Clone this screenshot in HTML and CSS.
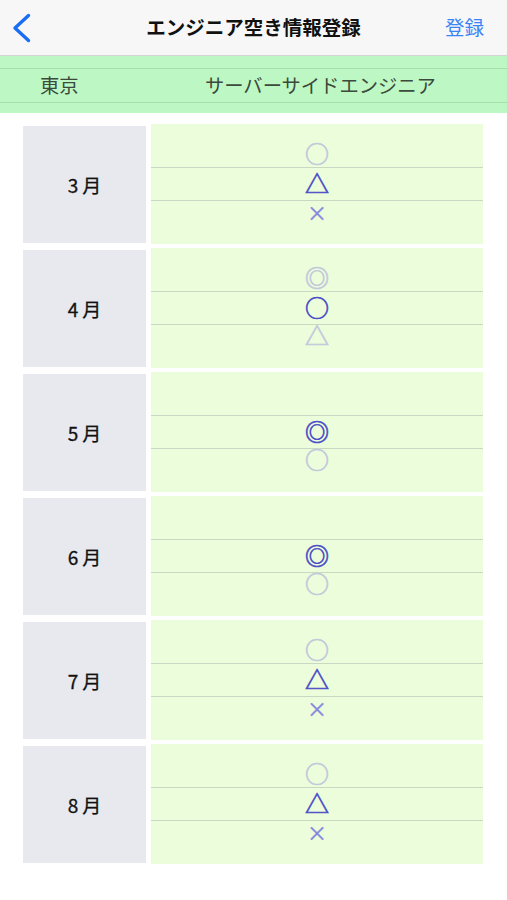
FILE: index.html
```html
<!DOCTYPE html>
<html lang="ja">
<head>
<meta charset="utf-8">
<title>エンジニア空き情報登録</title>
<link rel="stylesheet" href="styles.css">
</head>
<body>
<header class="nav">
  <div class="nav-back">
    <svg width="40" height="55" viewBox="0 0 40 55"><polyline points="28.5,15.5 15,28 28.5,40.5" fill="none" stroke="#1a6ef4" stroke-width="3.4" stroke-linecap="round" stroke-linejoin="round"/></svg>
  </div>
  <div class="nav-title">エンジニア空き情報登録</div>
  <div class="nav-action">登録</div>
</header>
<section class="cond">
  <div class="cond-row">
    <span class="cond-area">東京</span>
    <span class="cond-job">サーバーサイドエンジニア</span>
  </div>
</section>
<main class="list">
  <div class="month">
    <div class="month-label">3月</div>
    <div class="picker">
      <div class="row row-top"><span class="sym dim">○</span></div>
      <div class="row row-mid"><span class="sym on">△</span></div>
      <div class="row row-bot"><span class="sym x">×</span></div>
    </div>
  </div>
  <div class="month">
    <div class="month-label">4月</div>
    <div class="picker">
      <div class="row row-top"><span class="sym dim">◎</span></div>
      <div class="row row-mid"><span class="sym on">○</span></div>
      <div class="row row-bot"><span class="sym dim">△</span></div>
    </div>
  </div>
  <div class="month">
    <div class="month-label">5月</div>
    <div class="picker">
      <div class="row row-top"></div>
      <div class="row row-mid"><span class="sym on">◎</span></div>
      <div class="row row-bot"><span class="sym dim">○</span></div>
    </div>
  </div>
  <div class="month">
    <div class="month-label">6月</div>
    <div class="picker">
      <div class="row row-top"></div>
      <div class="row row-mid"><span class="sym on">◎</span></div>
      <div class="row row-bot"><span class="sym dim">○</span></div>
    </div>
  </div>
  <div class="month">
    <div class="month-label">7月</div>
    <div class="picker">
      <div class="row row-top"><span class="sym dim">○</span></div>
      <div class="row row-mid"><span class="sym on">△</span></div>
      <div class="row row-bot"><span class="sym x">×</span></div>
    </div>
  </div>
  <div class="month">
    <div class="month-label">8月</div>
    <div class="picker">
      <div class="row row-top"><span class="sym dim">○</span></div>
      <div class="row row-mid"><span class="sym on">△</span></div>
      <div class="row row-bot"><span class="sym x">×</span></div>
    </div>
  </div>
</main>
</body>
</html>
```
FILE: styles.css
```css
* { box-sizing: border-box; }
html, body { margin: 0; padding: 0; }
body {
  width: 507px;
  height: 900px;
  background: #ffffff;
  font-family: "Noto Sans CJK JP", "Noto Sans", sans-serif;
  overflow: hidden;
}
.nav {
  height: 56px;
  background: #f7f7f7;
  border-bottom: 1px solid #d4d4d4;
  display: grid;
  grid-template-columns: 100px 1fr 100px;
  align-items: center;
}
.nav-back { height: 55px; }
.nav-back svg { display: block; }
.nav-title {
  text-align: center;
  font-size: 19.5px;
  font-weight: 700;
  color: #111;
  line-height: 1;
  margin-top: -1px;
}
.nav-action {
  text-align: right;
  padding-right: 23px;
  font-size: 19.5px;
  color: #3b84f5;
  line-height: 1;
  margin-top: -1px;
}
.cond {
  height: 57px;
  background: #bdf8c4;
  padding-top: 12px;
}
.cond-row {
  height: 35px;
  border-top: 1px solid #a6deae;
  border-bottom: 1px solid #a6deae;
  display: flex;
  align-items: center;
  color: #3b4a3c;
  font-size: 19.3px;
  line-height: 1;
}
.cond-area { width: 136px; padding-left: 40px; }
.cond-job { flex: 1; padding-left: 69px; }
.list {
  padding: 11px 24px 0 23px;
  display: flex;
  flex-direction: column;
  gap: 4px;
}
.month {
  height: 120px;
  display: flex;
  gap: 5px;
}
.month-label {
  width: 123px;
  margin: 2px 0 1px;
  background: #e8e9ee;
  display: flex;
  align-items: center;
  justify-content: center;
  font-size: 19px;
  font-weight: 400;
  letter-spacing: 4px;
  padding-left: 4px;
  color: #111;
  padding-bottom: 1px;
  -webkit-text-stroke: 0.3px #111;
}
.picker {
  flex: 1;
  background: #ebfdda;
  display: flex;
  flex-direction: column;
}
.row {
  display: flex;
  justify-content: center;
}
.row-top {
  height: 44px;
  border-bottom: 1.5px solid #c9d8c2;
  align-items: flex-end;
  padding-bottom: 4px;
}
.row-mid {
  height: 33px;
  border-bottom: 1.5px solid #c9d8c2;
  align-items: center;
}
.row-mid .sym { margin-top: -2px; }
.row-bot {
  flex: 1;
  align-items: flex-start;
}
.sym {
  display: block;
  height: 20px;
  line-height: 20px;
  font-size: 24px;
  font-weight: 400;
  font-family: "Noto Sans CJK JP", sans-serif;
  -webkit-text-stroke: 0.7px currentColor;
}
.sym.x { font-size: 20px; margin-top: 2px; -webkit-text-stroke: 0.4px currentColor; }
.dim { color: #c3c9dc; }
.on { color: #4e4fc8; }
.x { color: #8686dc; }
```
